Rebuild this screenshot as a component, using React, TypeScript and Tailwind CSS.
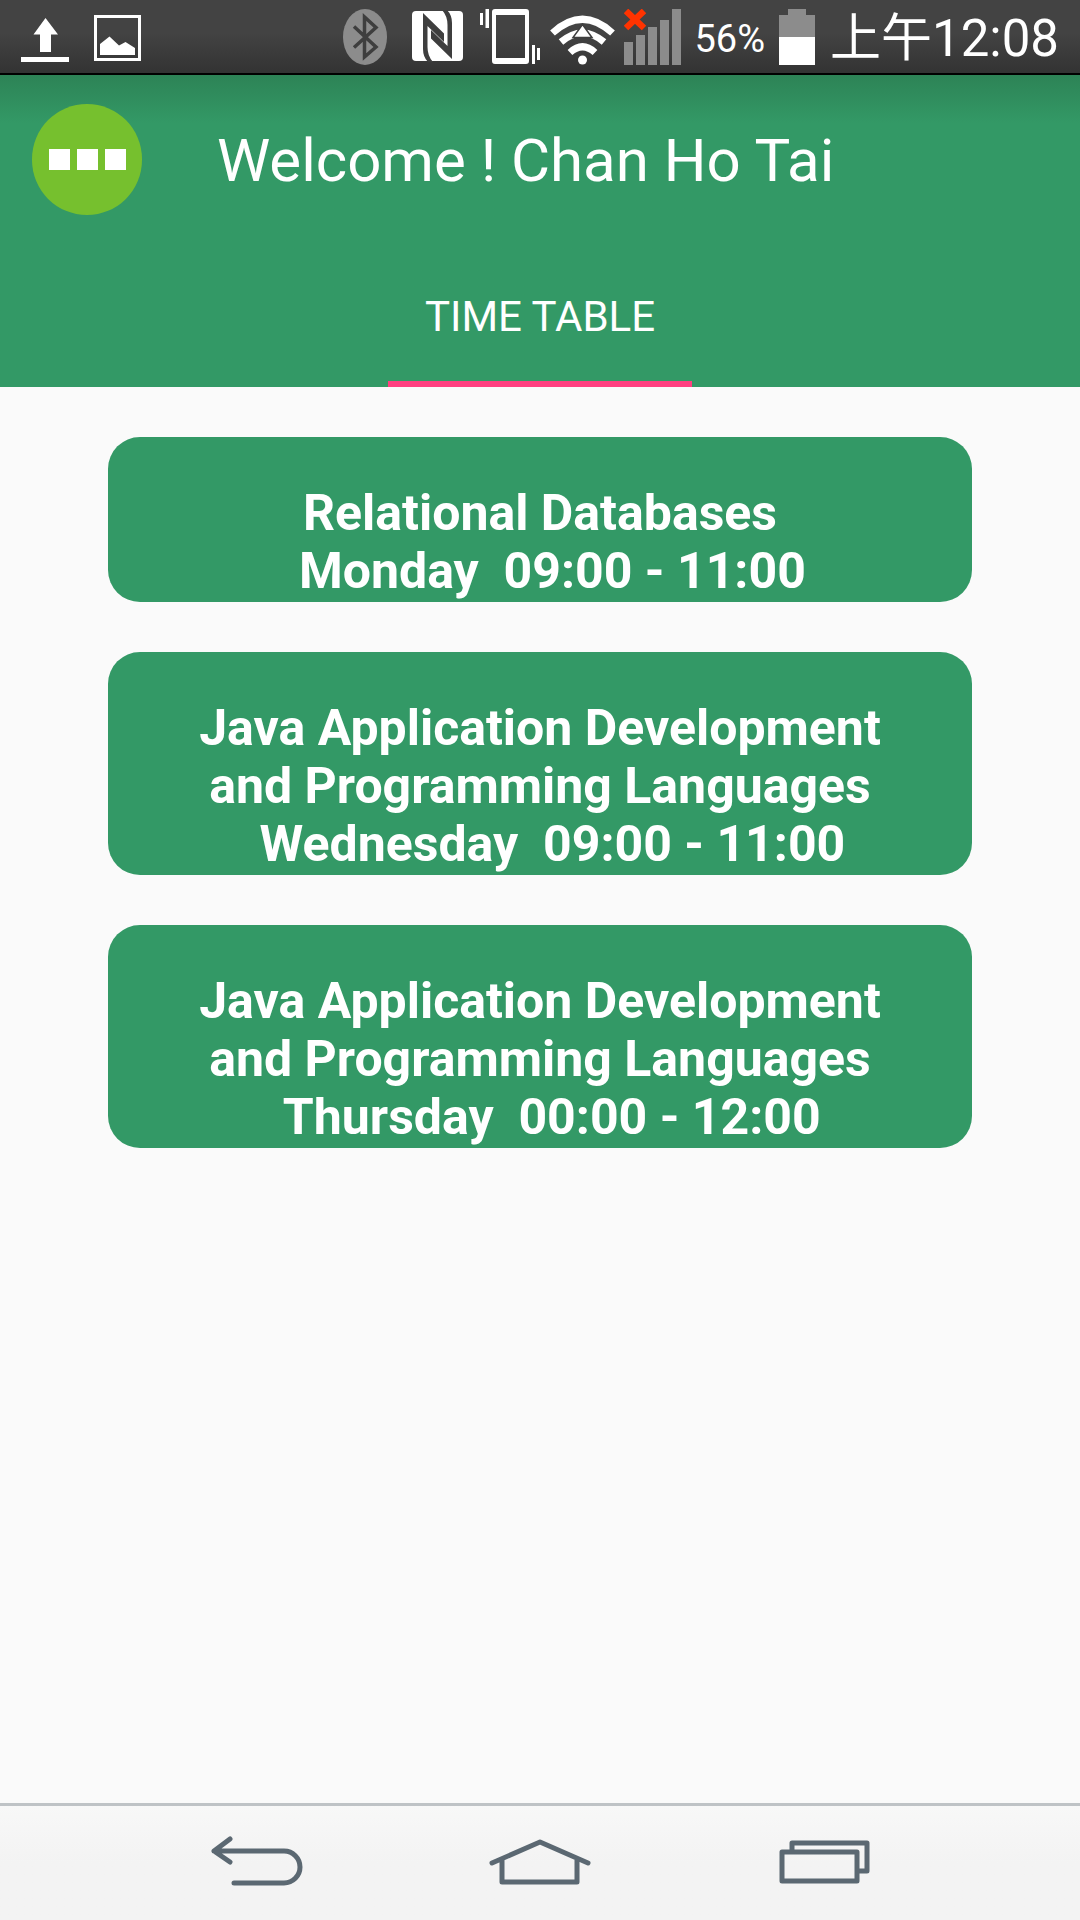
import type { ReactNode } from 'react'

type Lesson = { course: string[]; day: string; time: string }

const lessons: Lesson[] = [
  { course: ['Relational Databases'], day: 'Monday', time: '09:00 - 11:00' },
  {
    course: ['Java Application Development', 'and Programming Languages'],
    day: 'Wednesday',
    time: '09:00 - 11:00',
  },
  {
    course: ['Java Application Development', 'and Programming Languages'],
    day: 'Thursday',
    time: '00:00 - 12:00',
  },
]

function StatusBar() {
  return (
    <div className="flex h-[75px] items-start justify-between border-b-2 border-black bg-linear-to-b from-[#434343] from-45% to-[#333333] px-[21px] pt-[9px] text-white">
      <div className="flex items-center gap-[25px]">
        <svg width="48" height="56" viewBox="0 0 48 56" fill="#fff" aria-label="Upload">
          <path d="M24.500 9 L37 25.500 H30 V43 H19 V25.500 H12.500Z" />
          <path d="M0 48h48v5H0z" />
        </svg>
        <svg width="47" height="56" viewBox="0 0 47 56" aria-label="Screenshot saved">
          <rect x="1.500" y="7.500" width="44" height="43" fill="none" stroke="#fff" strokeWidth="3" />
          <path d="M6 35 L15.500 27.500 L25 36.500 L31.500 33 L41 39 V46 H6Z" fill="#fff" />
        </svg>
      </div>
      <div className="flex items-start">
        <svg className="mr-[25px]" width="44" height="56" viewBox="0 0 44 56" aria-label="Bluetooth">
          <ellipse cx="22" cy="28" rx="22" ry="28" fill="#8c8c8c" />
          <path d="M11 17.500 L33 38 L21.500 48 V8 L33 18.500 L11 38.500" fill="none" stroke="#3e3e3e" strokeWidth="3.500" />
        </svg>
        <svg className="mr-[17px]" width="51" height="56" viewBox="0 0 51 56" aria-label="NFC">
          <rect y="2" width="51" height="50" rx="4" fill="#fff" />
          <path d="M11 4 L32 24.500 V33 L15.500 17 V38 Q15.500 47 21 53 H16 Q11 48 11 40Z" fill="#3e3e3e" />
          <path d="M40 50 L19 29.500 V21 L35.500 37 V16 Q35.500 7 30 1 H35 Q40 6 40 14Z" fill="#3e3e3e" />
        </svg>
        <svg className="mr-[9px]" width="61" height="56" viewBox="0 0 61 56" fill="#fff" aria-label="Vibrate">
          <path fillRule="evenodd" d="M15 0h31a3 3 0 0 1 3 3v49a3 3 0 0 1-3 3H15a3 3 0 0 1-3-3V3a3 3 0 0 1 3-3Z M16 6v43h29V6Z" />
          <path d="M0 4h3v12H0z M5.500 0h3.500v19H5.500z M52 36h3v19h-3z M57 39h3v12h-3z" />
        </svg>
        <svg className="mr-[9px]" width="65" height="56" viewBox="0 0 65 56" aria-label="Wi-Fi">
          <g fill="none" stroke="#fff" strokeWidth="7">
            <path d="M2.500 24 Q32.500 -3.500 62.500 24" />
            <path d="M11 33 Q32.500 15 54 33" />
            <path d="M20 43.500 Q32.500 32 45 43.500" />
          </g>
          <circle cx="32.500" cy="51" r="4.500" fill="#fff" />
          <path d="M32.500 15.500 L42 28.500 H23Z" fill="#fff" stroke="#3e3e3e" strokeWidth="1.500" />
        </svg>
        <svg className="mr-[13px]" width="57" height="56" viewBox="0 0 57 56" aria-label="No signal">
          <path d="M0 33h9v23H0z M12 26h9v30h-9z M24 18h9v38h-9z M36 11h9v45h-9z M48 0h9v56h-9z" fill="#8c8c8c" />
          <path d="M2 2 L20 19 M20 2 L2 19" stroke="#ff3300" strokeWidth="6.500" />
        </svg>
        <span className="mr-[14px] text-[38px] leading-[60px]">56%</span>
        <svg className="mr-[15px]" width="36" height="56" viewBox="0 0 36 56" aria-label="Battery">
          <path d="M9 0h18v6h9v22H0V6h9z" fill="#8c8c8c" />
          <path d="M0 28h36v28H0z" fill="#fff" />
        </svg>
        <span className="text-[51px] leading-[60px]">上午12:08</span>
      </div>
    </div>
  )
}

function Header() {
  return (
    <header className="bg-[#339966] bg-linear-to-b from-[#2d8356] to-[#339966] to-[48px] text-white">
      <div className="flex h-[168px] items-start pt-[29px] pl-8">
        <button type="button" aria-label="Menu" className="flex h-[111px] w-[110px] items-center justify-center gap-[7px] rounded-full bg-[#76c02e]">
          <span className="size-[21px] bg-white" />
          <span className="size-[21px] bg-white" />
          <span className="size-[21px] bg-white" />
        </button>
        <h1 className="ml-[75px] text-[60px] leading-[114px]">Welcome ! Chan Ho Tai</h1>
      </div>
      <nav className="flex h-[144px] justify-center" role="tablist">
        <button type="button" role="tab" aria-selected="true" className="border-b-[6px] border-[#ff4081] px-[37px] pt-[10px] text-[42px] leading-[128px]">
          TIME TABLE
        </button>
      </nav>
    </header>
  )
}

function LessonCard({ course, day, time }: Lesson) {
  return (
    <li className="rounded-[32px] bg-[#339966] pt-[47px] pb-[2px] text-center text-[50px] leading-[58px] font-bold whitespace-pre text-white">
      {course.map((line) => (
        <p key={line}>{line}</p>
      ))}
      <p>{`  ${day}  ${time}`}</p>
    </li>
  )
}

function NavButton({ label, children }: { label: string; children: ReactNode }) {
  return (
    <button type="button" aria-label={label} className="flex items-start justify-center pt-[28px]">
      <svg width="104" height="54" viewBox="0 0 104 54" fill="none" stroke="#5b6872" strokeWidth="5" strokeLinecap="round" strokeLinejoin="round">
        {children}
      </svg>
    </button>
  )
}

function NavigationBar() {
  return (
    <nav className="border-t-[3px] border-[#bfc3c6] bg-linear-to-b from-[#f8f8f8] to-[#f3f3f3] to-50%">
      <div className="mx-auto grid h-[114px] w-[79%] grid-cols-3">
        <NavButton label="Back">
          <path d="M26 5 L10 17 L26 28 M10 17 H80 A16 16 0 0 1 80 49 H30" />
        </NavButton>
        <NavButton label="Home">
          <path d="M4 29 L52 8 L100 29 M14 26 V48 H89 V26" />
        </NavButton>
        <NavButton label="Recent apps">
          <path d="M10 18 H85 V47 H10Z M20 18 V9 H95 V37 H85" strokeLinecap="butt" />
        </NavButton>
      </div>
    </nav>
  )
}

export default function App() {
  return (
    <div className="flex min-h-screen flex-col bg-[#fafafa] font-[Roboto,'Noto_Sans_CJK_TC',sans-serif]">
      <StatusBar />
      <Header />
      <main className="grow">
        <ul className="mx-auto mt-[50px] flex w-4/5 flex-col gap-[50px]">
          {lessons.map((lesson) => (
            <LessonCard key={lesson.day} {...lesson} />
          ))}
        </ul>
      </main>
      <NavigationBar />
    </div>
  )
}
